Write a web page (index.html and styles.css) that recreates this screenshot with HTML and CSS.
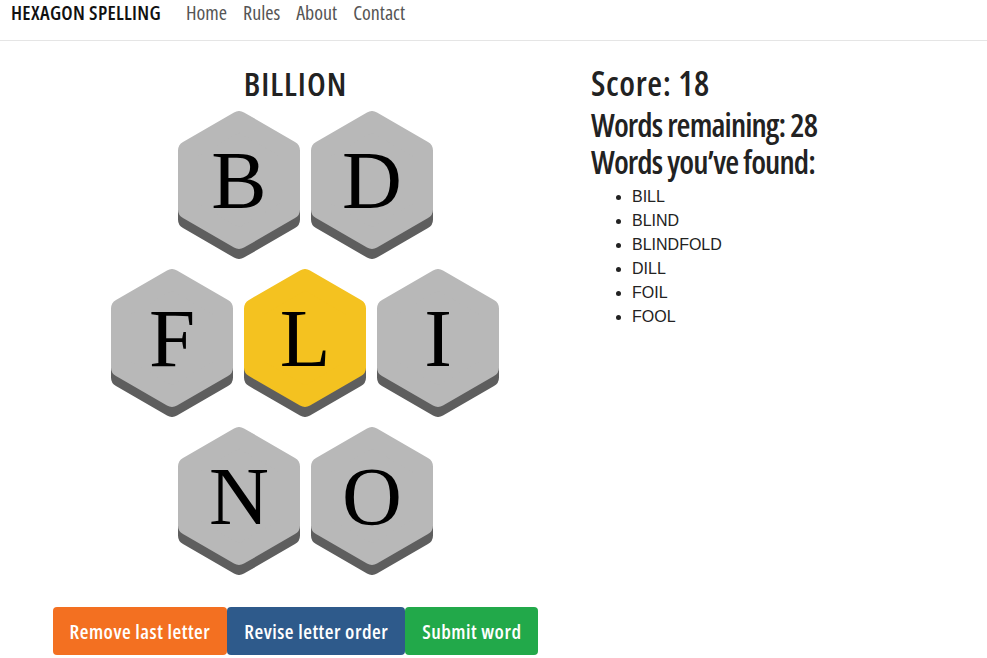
FILE: index.html
```html
<!DOCTYPE html>
<html lang="en">
<head>
<meta charset="utf-8">
<title>Hexagon Spelling</title>
<link rel="stylesheet" href="styles.css">
</head>
<body>
<nav class="navbar">
  <span class="brand">HEXAGON SPELLING</span>
  <ul class="nav-links">
    <li>Home</li>
    <li>Rules</li>
    <li>About</li>
    <li>Contact</li>
  </ul>
</nav>
<main class="layout">
  <section class="game">
    <h1 class="current-word">BILLION</h1>
    <div class="hive">
      <div class="hive-row">
        <div class="hex">
          <svg viewBox="0 0 122 148" width="122" height="148"><polygon class="hex-shadow" points="61,20.1 112,49.55 112,108.45 61,137.9 10,108.45 10,49.55"/><polygon class="hex-face" points="61,10.1 112,39.55 112,98.45 61,127.9 10,98.45 10,39.55"/><text x="61" y="97" class="hex-letter">B</text></svg>
        </div>
        <div class="hex">
          <svg viewBox="0 0 122 148" width="122" height="148"><polygon class="hex-shadow" points="61,20.1 112,49.55 112,108.45 61,137.9 10,108.45 10,49.55"/><polygon class="hex-face" points="61,10.1 112,39.55 112,98.45 61,127.9 10,98.45 10,39.55"/><text x="61" y="97" class="hex-letter">D</text></svg>
        </div>
      </div>
      <div class="hive-row">
        <div class="hex">
          <svg viewBox="0 0 122 148" width="122" height="148"><polygon class="hex-shadow" points="61,20.1 112,49.55 112,108.45 61,137.9 10,108.45 10,49.55"/><polygon class="hex-face" points="61,10.1 112,39.55 112,98.45 61,127.9 10,98.45 10,39.55"/><text x="61" y="97" class="hex-letter">F</text></svg>
        </div>
        <div class="hex hex-center">
          <svg viewBox="0 0 122 148" width="122" height="148"><polygon class="hex-shadow" points="61,20.1 112,49.55 112,108.45 61,137.9 10,108.45 10,49.55"/><polygon class="hex-face" points="61,10.1 112,39.55 112,98.45 61,127.9 10,98.45 10,39.55"/><text x="61" y="97" class="hex-letter">L</text></svg>
        </div>
        <div class="hex">
          <svg viewBox="0 0 122 148" width="122" height="148"><polygon class="hex-shadow" points="61,20.1 112,49.55 112,108.45 61,137.9 10,108.45 10,49.55"/><polygon class="hex-face" points="61,10.1 112,39.55 112,98.45 61,127.9 10,98.45 10,39.55"/><text x="61" y="97" class="hex-letter">I</text></svg>
        </div>
      </div>
      <div class="hive-row">
        <div class="hex">
          <svg viewBox="0 0 122 148" width="122" height="148"><polygon class="hex-shadow" points="61,20.1 112,49.55 112,108.45 61,137.9 10,108.45 10,49.55"/><polygon class="hex-face" points="61,10.1 112,39.55 112,98.45 61,127.9 10,98.45 10,39.55"/><text x="61" y="97" class="hex-letter">N</text></svg>
        </div>
        <div class="hex">
          <svg viewBox="0 0 122 148" width="122" height="148"><polygon class="hex-shadow" points="61,20.1 112,49.55 112,108.45 61,137.9 10,108.45 10,49.55"/><polygon class="hex-face" points="61,10.1 112,39.55 112,98.45 61,127.9 10,98.45 10,39.55"/><text x="61" y="97" class="hex-letter">O</text></svg>
        </div>
      </div>
    </div>
    <div class="actions">
      <button class="btn btn-remove">Remove last letter</button>
      <button class="btn btn-revise">Revise letter order</button>
      <button class="btn btn-submit">Submit word</button>
    </div>
  </section>
  <section class="stats">
    <h2 class="stat stat-score">Score: 18</h2>
    <h2 class="stat">Words remaining: 28</h2>
    <h2 class="stat">Words you’ve found:</h2>
    <ul class="found-list">
      <li>BILL</li>
      <li>BLIND</li>
      <li>BLINDFOLD</li>
      <li>DILL</li>
      <li>FOIL</li>
      <li>FOOL</li>
    </ul>
  </section>
</main>
</body>
</html>
```

FILE: styles.css
```css
* { box-sizing: border-box; }

body {
  margin: 0;
  background: #fff;
  color: #212121;
  font-family: "Open Sans", sans-serif;
  font-stretch: 75%;
}

.navbar {
  display: flex;
  align-items: flex-start;
  height: 41px;
  padding: 0 0 0 11px;
  border-bottom: 1px solid #e5e5e5;
}

.brand {
  font-size: 20px;
  line-height: 26px;
  font-weight: 600;
  letter-spacing: 0.3px;
  color: #111;
  margin-right: 25px;
}

.nav-links {
  display: flex;
  gap: 16px;
  margin: 0;
  padding: 0;
  list-style: none;
  font-size: 20px;
  line-height: 26px;
  color: #555;
}

.layout {
  display: grid;
  grid-template-columns: 591px 1fr;
}

.game {
  display: flex;
  flex-direction: column;
  align-items: center;
}

.current-word {
  margin: 21px 0 0;
  font-size: 33px;
  line-height: 44px;
  font-weight: 600;
  letter-spacing: 1px;
  color: #222;
}

.hive {
  display: flex;
  flex-direction: column;
  align-items: center;
  gap: 10px;
  margin-top: 5px;
  padding-left: 19px;
}

.hive-row {
  display: flex;
  gap: 11px;
}

.hex svg { display: block; }

.hex-face {
  fill: #b8b8b8;
  stroke: #b8b8b8;
  stroke-width: 20;
  stroke-linejoin: round;
}

.hex-shadow {
  fill: #5e5e5e;
  stroke: #5e5e5e;
  stroke-width: 20;
  stroke-linejoin: round;
}

.hex-center .hex-face {
  fill: #f4c220;
  stroke: #f4c220;
}

.hex-letter {
  font-family: "Liberation Serif", serif;
  font-stretch: normal;
  font-size: 83px;
  fill: #000;
  text-anchor: middle;
}

.actions {
  display: flex;
  margin-top: 32px;
}

.btn {
  height: 48px;
  border: 0;
  border-radius: 4px;
  color: #fff;
  font-family: inherit;
  font-stretch: 75%;
  font-size: 20px;
  font-weight: 600;
  letter-spacing: 0.5px;
  white-space: nowrap;
  padding: 0 17px;
}

.btn-remove { background: #f37021; }
.btn-revise { background: #2e5a8b; }
.btn-submit { background: #22a94a; }

.stats {
  padding-top: 22px;
}

.stat {
  margin: 0;
  font-size: 32px;
  line-height: 37px;
  font-weight: 600;
  letter-spacing: -0.9px;
  color: #222;
}

.stat-score {
  margin-bottom: 3px;
  font-size: 34px;
  line-height: 40px;
  letter-spacing: 0.6px;
}

.found-list {
  margin: 5px 0 0;
  padding-left: 41px;
  font-family: "Liberation Sans", Arial, sans-serif;
  font-stretch: normal;
  font-size: 16px;
  line-height: 24px;
  color: #222;
}
```
